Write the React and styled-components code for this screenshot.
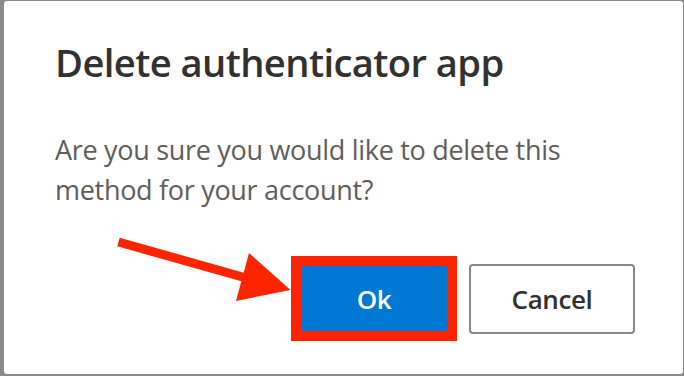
import React from "react";
import styled, { createGlobalStyle } from "styled-components";

const Global = createGlobalStyle`
  html, body { margin: 0; padding: 0; }
  body {
    background: #8a8a8a;
    width: 684px;
    height: 376px;
    overflow: hidden;
    font-family: "Open Sans", "Noto Sans", sans-serif;
  }
`;

const Stage = styled.div`
  position: relative;
  width: 684px;
  height: 376px;
  padding: 1px 1px 2px 4px;
  box-sizing: border-box;
  display: flex;
`;

const Card = styled.div`
  flex: 1;
  background: #ffffff;
  border-radius: 3px;
  padding: 35px 48px 33px 51px;
  display: flex;
  flex-direction: column;
`;

const Title = styled.h1`
  margin: 0;
  font-size: 38.2px;
  line-height: 52px;
  font-weight: 600;
  color: #323130;
  letter-spacing: -0.6px;
`;

const Message = styled.p`
  margin: 42px 0 0;
  font-size: 27px;
  line-height: 40px;
  font-weight: 400;
  color: #605e5c;
  width: 540px;
  letter-spacing: -0.3px;
`;

const Actions = styled.div`
  margin-top: auto;
  display: flex;
  justify-content: flex-end;
  align-items: center;
  gap: 12px;
`;

const Highlight = styled.span`
  display: inline-flex;
  border: 10px solid #ff2400;
`;

const Button = styled.button`
  box-sizing: border-box;
  display: inline-flex;
  align-items: center;
  justify-content: center;
  font-family: "Open Sans", "Noto Sans", sans-serif;
  font-size: 26px;
  font-weight: 600;
  letter-spacing: -0.4px;
  cursor: pointer;
  width: ${(p) => (p.$primary ? "146px" : "166px")};
  height: ${(p) => (p.$primary ? "65px" : "70px")};
  border-radius: ${(p) => (p.$primary ? "0" : "4px")};
  border: ${(p) => (p.$primary ? "none" : "2px solid #8a8886")};
  background: ${(p) => (p.$primary ? "#0078d4" : "#ffffff")};
  color: ${(p) => (p.$primary ? "#ffffff" : "#323130")};
  padding: 0;
`;

const Arrow = styled.svg`
  position: absolute;
  left: 0;
  top: 0;
  pointer-events: none;
`;

export default function App() {
  return (
    <>
      <Global />
      <Stage>
        <Card>
          <Title>Delete authenticator app</Title>
          <Message>
            Are you sure you would like to delete this method for your account?
          </Message>
          <Actions>
            <Highlight>
              <Button $primary>Ok</Button>
            </Highlight>
            <Button>Cancel</Button>
          </Actions>
        </Card>
        <Arrow width="684" height="376" viewBox="0 0 684 376">
          <polygon
            fill="#ff2400"
            points="119.7,237.7 243.7,272.7 249,253 290.5,290 236,301 241.3,281.3 117.3,246.3"
          />
        </Arrow>
      </Stage>
    </>
  );
}
